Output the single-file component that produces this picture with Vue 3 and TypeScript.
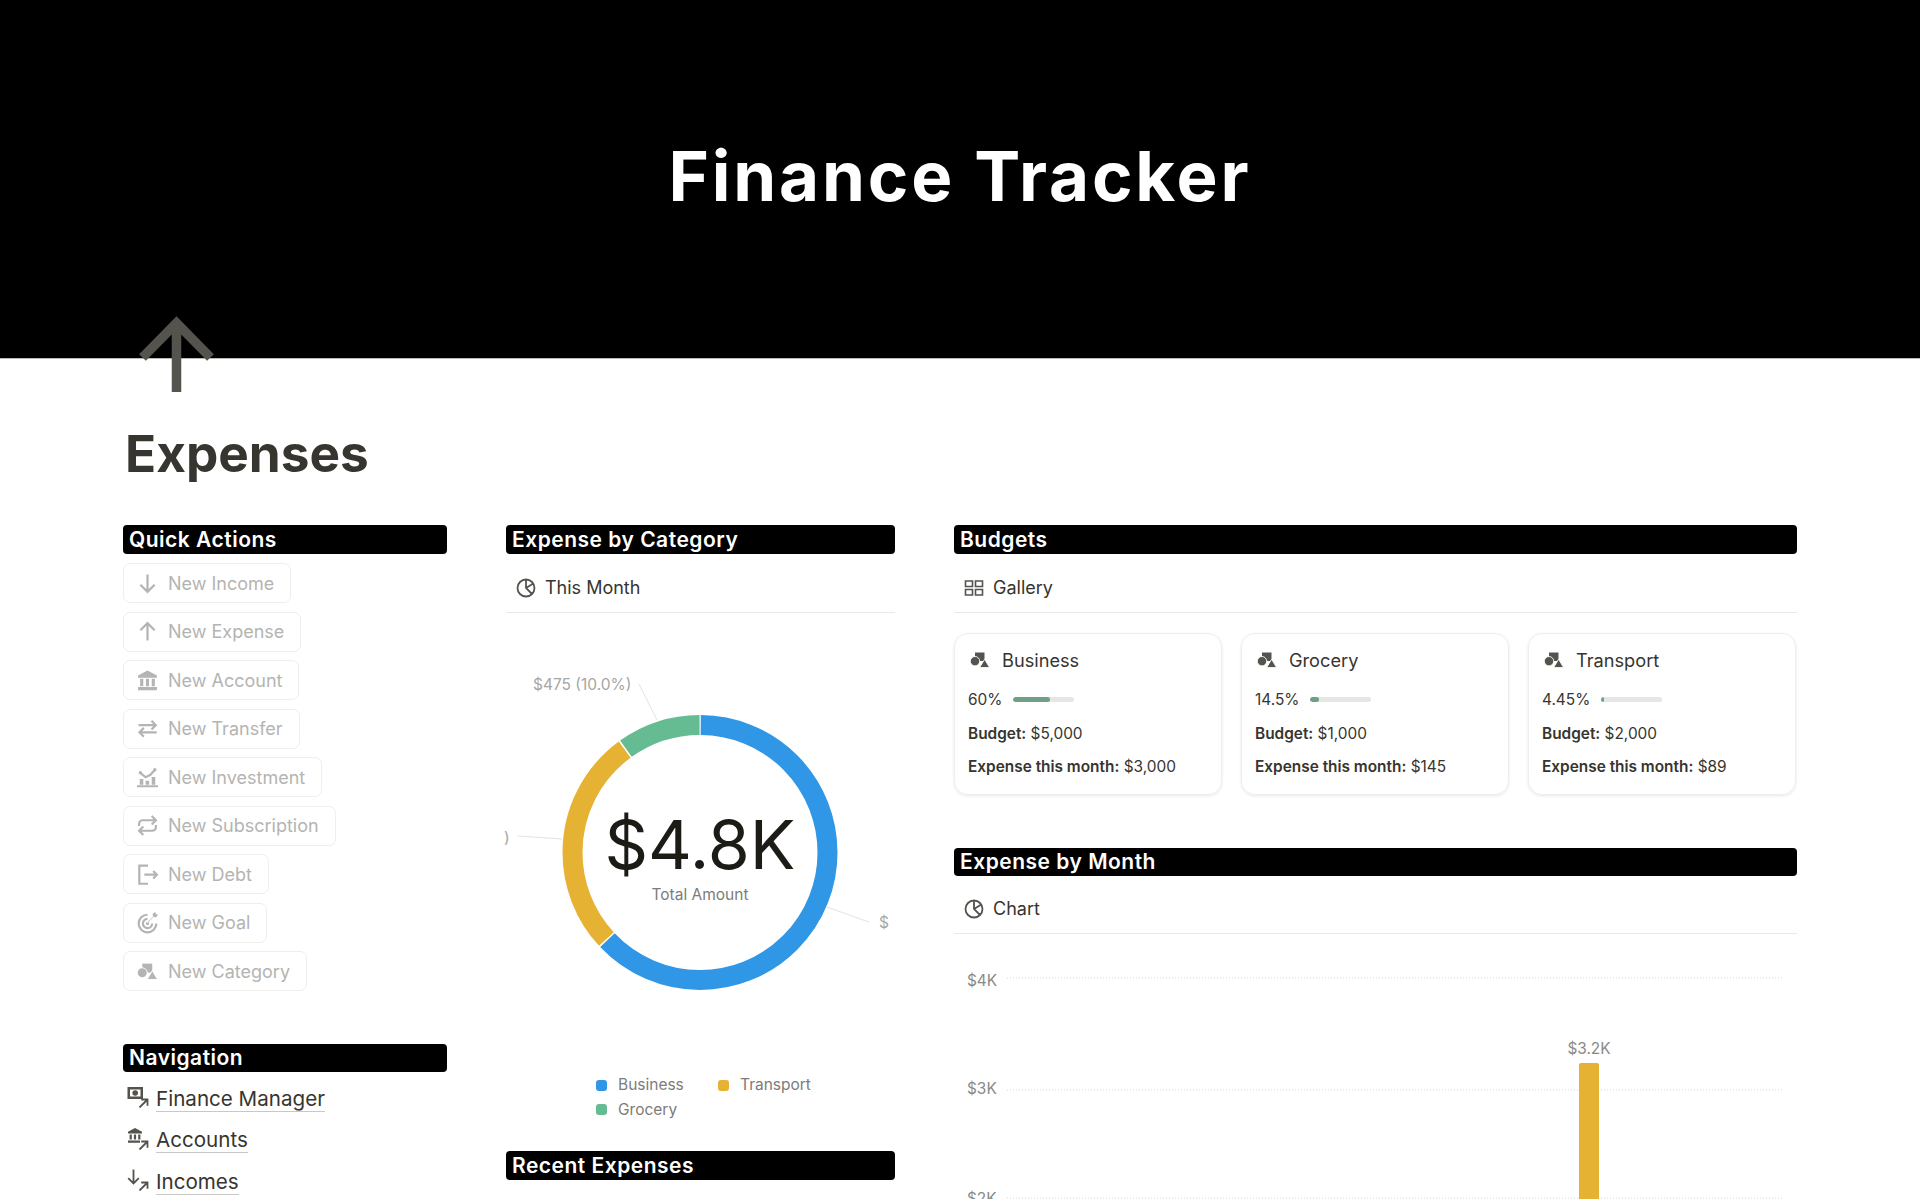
<script setup lang="ts">
type Part = { d: string; kind: 'line' | 'fill' | 'gap' }
type IconName = 'down' | 'up' | 'bank' | 'transfer' | 'invest' | 'repeat' | 'debt' | 'goal' | 'shapes' | 'cash'

const icons: Record<IconName, Part[]> = {
  down: [{ d: 'M10 1.5v16.5M3.2 11.2l6.8 6.8 6.8-6.8', kind: 'line' }],
  up: [{ d: 'M10 18.5V2M3.2 8.8L10 2l6.8 6.8', kind: 'line' }],
  bank: [{ d: 'M10 0.5l9 4.8v2h-18v-2zM3 8.4h3v7H3zM8.5 8.4h3v7h-3zM14 8.4h3v7h-3zM1 16.2h18v3H1z', kind: 'fill' }],
  transfer: [{ d: 'M1.5 6.8h16.4M13.8 2.6l4.1 4.2-4.1 4.2M18.8 13.6H2.4M6.5 9.4l-4.1 4.2 4.1 4.2', kind: 'line' }],
  invest: [
    { d: 'M0 17.4h20V19.4H0zM2.6 11.5h3.4v5.4H2.6zM8.2 13h3.4v3.9H8.2zM14 9.5h3.4v7.4H14zM1.6 5.4a1.6 1.6 0 1 0 3.2 0a1.6 1.6 0 1 0-3.2 0zM15.4 2.6a1.6 1.6 0 1 0 3.2 0a1.6 1.6 0 1 0-3.2 0z', kind: 'fill' },
    { d: 'M3.2 5.6l5 4.2 4.6-2.4 4-4.6', kind: 'line' }
  ],
  repeat: [{ d: 'M2 10.5V8.4A3.4 3.4 0 0 1 5.4 5H18M14 1l4 4-4 4M18 9.5v2.1a3.4 3.4 0 0 1-3.4 3.4H2M6 11l-4 4 4 4', kind: 'line' }],
  debt: [{ d: 'M10.5 1.6H2.2v17.2h8.3M7 10.2h12M15.4 6.6l3.6 3.6-3.6 3.6', kind: 'line' }],
  goal: [
    { d: 'M10 2.6a8.4 8.4 0 1 0 8.4 8.4M10 6.6a4.4 4.4 0 1 0 4.4 4.4', kind: 'line' },
    { d: 'M8.4 11a1.6 1.6 0 1 0 3.2 0a1.6 1.6 0 1 0-3.2 0zM9.4 10.2l6-6-.6-2.2L17.4 0l.6 2 2 .6-2 2.6-2.2-.6-6 6z', kind: 'fill' }
  ],
  shapes: [
    { d: 'M5 2.5h9.5V11H5z', kind: 'fill' },
    { d: 'M5 6.5a4.7 4.7 0 1 0 0 9.4a4.7 4.7 0 1 0 0-9.4z', kind: 'gap' },
    { d: 'M14.6 9.2l5 8.4h-10z', kind: 'gap' }
  ],
  cash: [{ d: 'M0.5 1h15.5v12H0.5zM3 3.4v7.2h10.5V3.4zM8.2 4.2a2.8 2.8 0 1 0 0 5.6a2.8 2.8 0 1 0 0-5.6z', kind: 'fill' }]
}

const actions: { label: string; icon: IconName }[] = [
  { label: 'New Income', icon: 'down' },
  { label: 'New Expense', icon: 'up' },
  { label: 'New Account', icon: 'bank' },
  { label: 'New Transfer', icon: 'transfer' },
  { label: 'New Investment', icon: 'invest' },
  { label: 'New Subscription', icon: 'repeat' },
  { label: 'New Debt', icon: 'debt' },
  { label: 'New Goal', icon: 'goal' },
  { label: 'New Category', icon: 'shapes' }
]

const navLinks: { label: string; icon: Part[] }[] = [
  { label: 'Finance Manager', icon: icons.cash },
  { label: 'Accounts', icon: [{ d: 'M8 0l7 3.8v1.7H1V3.8zM2.6 6.5h2.2v5H2.6zM6.9 6.5h2.2v5H6.9zM11.2 6.5h2.2v5h-2.2zM1 12.5h12v2.2H1z', kind: 'fill' }] },
  { label: 'Incomes', icon: [{ d: 'M6.5 0.5v14M1.2 9.2l5.3 5.3 5.3-5.3', kind: 'line' }] }
]

const budgets = [
  { name: 'Business', percent: '60%', fill: 60, budget: '$5,000', spent: '$3,000' },
  { name: 'Grocery', percent: '14.5%', fill: 14.5, budget: '$1,000', spent: '$145' },
  { name: 'Transport', percent: '4.45%', fill: 4.45, budget: '$2,000', spent: '$89' }
]

// donut geometry, clockwise from twelve o'clock
const center = { x: 194, y: 137.5 }
const radius = 127.5
const circumference = 2 * Math.PI * radius
const segments = [
  { color: '#3096e6', share: 0.63, start: 0 },
  { color: '#e5b233', share: 0.27, start: 0.63 },
  { color: '#65bb92', share: 0.1, start: 0.9 }
]
const dash = (share: number) => `${share * circumference - 1.5} ${circumference}`
const offset = (start: number) => -(start * circumference) - 0.75

const gridLines = [
  { label: '$4K', y: 44, textY: 52 },
  { label: '$3K', y: 156, textY: 160 },
  { label: '$2K', y: 264, textY: 270 }
]
</script>

<template>
  <div class="page">
    <header class="cover">
      <h1 class="cover-title">Finance Tracker</h1>
      <svg class="page-icon" viewBox="0 0 78 78" aria-hidden="true">
        <path d="M38.5 7v69M4.5 41.5L38.5 7l34 34.5" />
      </svg>
    </header>

    <main class="content">
      <h2 class="page-title">Expenses</h2>

      <div class="columns">
        <section class="col">
          <h3 class="bar">Quick Actions</h3>
          <div class="actions">
            <div v-for="action in actions" :key="action.label" class="action">
              <svg class="icon" viewBox="0 0 20 20" aria-hidden="true">
                <path v-for="part in icons[action.icon]" :key="part.d" :d="part.d" :class="part.kind" />
              </svg>
              <span>{{ action.label }}</span>
            </div>
          </div>

          <h3 class="bar nav-bar">Navigation</h3>
          <nav class="nav">
            <div v-for="link in navLinks" :key="link.label" class="nav-link">
              <svg class="nav-icon" viewBox="0 0 22 22" aria-hidden="true">
                <path v-for="part in link.icon" :key="part.d" :d="part.d" :class="part.kind" />
                <path class="line" d="M12.5 21.5l8-8M14.2 13.5h6.3v6.3" />
              </svg>
              <span>{{ link.label }}</span>
            </div>
          </nav>
        </section>

        <section class="col">
          <h3 class="bar">Expense by Category</h3>
          <div class="view-tab">
            <svg class="icon" viewBox="0 0 20 20" aria-hidden="true">
              <path class="line" d="M10 1.5a8.5 8.5 0 1 0 0 17a8.5 8.5 0 1 0 0-17zM10 1.5V10l6 6M10 10l6.5-4" />
            </svg>
            <span>This Month</span>
          </div>

          <div class="donut">
            <svg class="donut-svg" viewBox="0 0 388 275">
              <circle
                v-for="seg in segments"
                :key="seg.color"
                :cx="center.x"
                :cy="center.y"
                :r="radius"
                :stroke="seg.color"
                :stroke-dasharray="dash(seg.share)"
                :stroke-dashoffset="offset(seg.start)"
                :transform="`rotate(-90 ${center.x} ${center.y})`"
                class="seg"
              />
              <path class="leader" d="M133 -31l18 36M12 121l44 3M363 207l-42-15" />
              <text class="callout" x="27" y="-25">$475 (10.0%)</text>
              <text class="callout" x="-2" y="128">)</text>
              <text class="callout" x="373" y="213">$</text>
            </svg>
            <div class="donut-center">
              <div class="amount">$4.8K</div>
              <div class="amount-label">Total Amount</div>
            </div>
          </div>

          <div class="legend">
            <div class="legend-item"><i class="dot blue"></i>Business</div>
            <div class="legend-item"><i class="dot yellow"></i>Transport</div>
            <div class="legend-item"><i class="dot green"></i>Grocery</div>
          </div>

          <h3 class="bar recent-bar">Recent Expenses</h3>
        </section>

        <section class="col">
          <h3 class="bar">Budgets</h3>
          <div class="view-tab">
            <svg class="icon" viewBox="0 0 20 20" aria-hidden="true">
              <path class="line thin" d="M1.5 3h7v5.5h-7zM11.5 3h7v5.5h-7zM1.5 11.5h7V17h-7zM11.5 11.5h7V17h-7z" />
            </svg>
            <span>Gallery</span>
          </div>

          <div class="gallery">
            <article v-for="item in budgets" :key="item.name" class="card">
              <div class="card-head">
                <svg class="icon" viewBox="0 0 20 20" aria-hidden="true">
                  <path v-for="part in icons.shapes" :key="part.d" :d="part.d" :class="part.kind" />
                </svg>
                <span>{{ item.name }}</span>
              </div>
              <div class="progress">
                <span>{{ item.percent }}</span>
                <div class="track"><div class="track-fill" :style="{ width: item.fill + '%' }"></div></div>
              </div>
              <p><b>Budget:</b> {{ item.budget }}</p>
              <p><b>Expense this month:</b> {{ item.spent }}</p>
            </article>
          </div>

          <h3 class="bar month-bar">Expense by Month</h3>
          <div class="view-tab">
            <svg class="icon" viewBox="0 0 20 20" aria-hidden="true">
              <path class="line" d="M10 1.5a8.5 8.5 0 1 0 0 17a8.5 8.5 0 1 0 0-17zM10 1.5V10l6 6M10 10l6.5-4" />
            </svg>
            <span>Chart</span>
          </div>

          <svg class="chart" viewBox="0 0 843 270">
            <g v-for="line in gridLines" :key="line.label">
              <line class="grid" x1="53" x2="829" :y1="line.y" :y2="line.y" />
              <text class="axis" x="13" :y="line.textY">{{ line.label }}</text>
            </g>
            <rect class="column" x="625" y="129" width="20" height="150" rx="2" />
            <text class="axis" x="635" y="120" text-anchor="middle">$3.2K</text>
          </svg>
        </section>
      </div>
    </main>
  </div>
</template>

<style>
body {
  margin: 0;
  background: #fff;
}
</style>

<style scoped>
.page {
  position: relative;
  height: 1199px;
  overflow: hidden;
  font-family: Inter, "Liberation Sans", sans-serif;
  color: #37352f;
  background: #fff;
}

.cover {
  height: 359px;
  background: #000;
  display: flex;
  align-items: center;
  justify-content: center;
  border-bottom: 1px solid #b9b9b7;
  box-sizing: border-box;
}

.cover-title {
  margin: 0 0 6px;
  font-size: 69px;
  font-weight: 700;
  line-height: 1;
  letter-spacing: 2.8px;
  color: #fff;
}

.page-icon {
  position: absolute;
  left: 138px;
  top: 316px;
  width: 78px;
  height: 78px;
  fill: none;
  stroke: #55534e;
  stroke-width: 9.5;
}

.content {
  padding: 0 123px;
}

.page-title {
  margin: 63px 0 0 2px;
  font-size: 51.3px;
  line-height: 62px;
  font-weight: 700;
}

.columns {
  display: grid;
  grid-template-columns: 324px 389px 843px;
  column-gap: 59px;
  margin-top: 41px;
}

.col {
  min-width: 0;
}

.bar {
  margin: 0;
  height: 29px;
  padding-left: 6px;
  border-radius: 4px;
  background: #000;
  color: #fff;
  font-size: 21px;
  font-weight: 600;
  line-height: 29px;
  letter-spacing: 0.5px;
}

.icon {
  width: 20px;
  height: 20px;
  flex: none;
  color: #55534e;
  overflow: visible;
}

.line {
  fill: none;
  stroke: currentColor;
  stroke-width: 1.8;
}

.line.thin {
  stroke-width: 1.6;
}

.fill {
  fill: currentColor;
}

.gap {
  fill: currentColor;
  stroke: #fff;
  stroke-width: 0.9;
}

.actions {
  display: flex;
  flex-direction: column;
  align-items: flex-start;
  gap: 8.5px;
  margin-top: 9px;
}

.action {
  display: flex;
  align-items: center;
  gap: 10px;
  height: 40px;
  box-sizing: border-box;
  padding: 0 16px 0 13px;
  border: 1px solid #eeeeed;
  border-radius: 7px;
  font-size: 18px;
  color: #b4b4b2;
}

.action .icon {
  width: 21px;
  height: 21px;
  color: #b4b4b2;
}

.action .line {
  stroke-width: 2.1;
}

.nav-bar {
  height: 28px;
  line-height: 28px;
  margin-top: 52.5px;
}

.nav {
  display: flex;
  flex-direction: column;
  gap: 13.5px;
  margin-top: 13px;
}

.nav-link {
  display: flex;
  align-items: center;
  gap: 7px;
  height: 28px;
  padding-left: 4px;
  font-size: 20.6px;
}

.nav-link span {
  border-bottom: 1px solid #c9c8c6;
  line-height: 25px;
}

.nav-icon {
  width: 22px;
  height: 22px;
  flex: none;
  color: #55534e;
  margin-top: -3px;
}

.view-tab {
  display: flex;
  align-items: center;
  gap: 9px;
  height: 59px;
  padding: 9px 0 0 10px;
  box-sizing: border-box;
  border-bottom: 1px solid #e9e9e8;
  font-size: 18px;
}

.donut {
  position: relative;
  margin-top: 102px;
  height: 275px;
}

.donut-svg {
  display: block;
  width: 388px;
  height: 275px;
  overflow: visible;
}

.seg {
  fill: none;
  stroke-width: 20;
}

.leader {
  fill: none;
  stroke: #e3e3e2;
  stroke-width: 1;
}

.callout {
  fill: #a6a6a4;
  font-size: 15.5px;
}

.donut-center {
  position: absolute;
  left: 0;
  width: 388px;
  top: 91px;
  text-align: center;
}

.amount {
  font-size: 68px;
  line-height: 76px;
  color: #1d1b16;
}

.amount-label {
  margin-top: 3px;
  font-size: 15.5px;
  line-height: 20px;
  color: #7d7c78;
}

.legend {
  display: grid;
  grid-template-columns: 122px auto;
  row-gap: 4.5px;
  margin: 85px 0 0 90px;
  font-size: 15.5px;
  line-height: 20px;
  color: #7d7c78;
}

.legend-item {
  display: flex;
  align-items: center;
  gap: 11px;
}

.dot {
  width: 11px;
  height: 11px;
  border-radius: 3px;
}

.blue {
  background: #3096e6;
}

.yellow {
  background: #e5b233;
}

.green {
  background: #65bb92;
}

.recent-bar {
  margin-top: 31px;
}

.gallery {
  display: grid;
  grid-template-columns: repeat(3, 268px);
  column-gap: 19px;
  margin-top: 20px;
}

.card {
  height: 162px;
  box-sizing: border-box;
  padding: 14px 13px 0;
  border: 1px solid #eeeeed;
  border-radius: 14px;
  box-shadow: 0 1px 3px rgba(15, 15, 15, 0.1);
  font-size: 15.4px;
}

.card p {
  margin: 13px 0 0;
  line-height: 20px;
}

.card b {
  font-weight: 600;
}

.card-head {
  display: flex;
  align-items: center;
  gap: 12px;
  height: 24px;
  padding-left: 2px;
  font-size: 18.2px;
}

.progress {
  display: flex;
  align-items: center;
  gap: 11px;
  height: 24px;
  margin-top: 15px;
}

.track {
  width: 61px;
  height: 5px;
  border-radius: 3px;
  background: #e6e6e4;
  overflow: hidden;
}

.track-fill {
  height: 100%;
  border-radius: 3px;
  background: #6f9f85;
}

.month-bar {
  height: 28px;
  line-height: 28px;
  margin: 53px 0 -1px;
}

.chart {
  display: block;
  width: 843px;
  height: 270px;
}

.grid {
  stroke: #d6d6d4;
  stroke-dasharray: 1 2;
}

.axis {
  fill: #8a8986;
  font-size: 15.4px;
}

.column {
  fill: #e5b233;
}
</style>
